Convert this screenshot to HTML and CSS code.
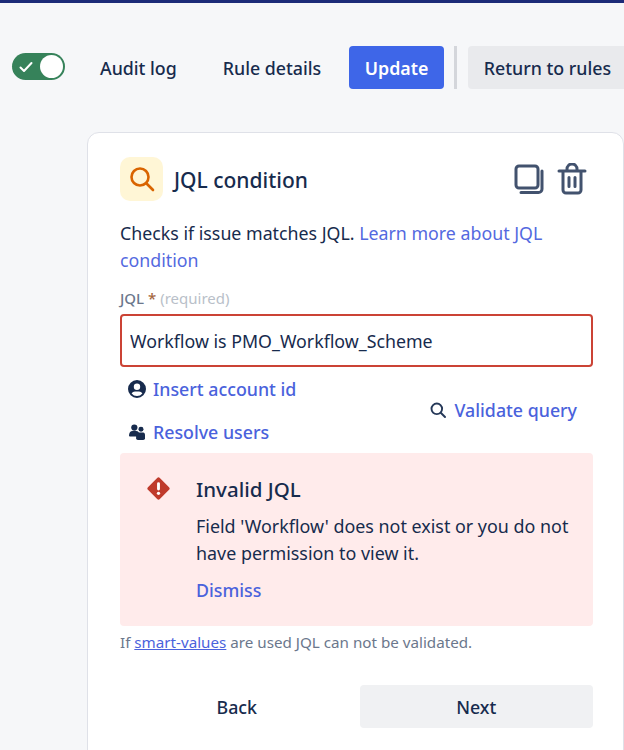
FILE: index.html
```html
<!DOCTYPE html>
<html lang="en">
<head>
<meta charset="utf-8">
<title>JQL condition</title>
<link rel="stylesheet" href="styles.css">
</head>
<body>
<div class="topline"></div>
<div class="toolbar">
  <div class="toggle">
    <svg class="toggle-check" viewBox="0 0 14 12" width="14" height="12"><path d="M1.5 6.5 5 10l7.5-8" fill="none" stroke="#fff" stroke-width="2" stroke-linecap="round" stroke-linejoin="round"/></svg>
    <span class="toggle-knob"></span>
  </div>
  <button class="btn btn-plain btn-audit">Audit log</button>
  <button class="btn btn-plain btn-details">Rule details</button>
  <button class="btn btn-primary">Update</button>
  <span class="divider"></span>
  <button class="btn btn-grey">Return to rules</button>
</div>
<main class="card">
  <header class="card-head">
    <span class="icon-tile">
      <svg viewBox="0 0 26 26" width="26" height="26"><circle cx="11" cy="11" r="8.5" fill="none" stroke="#d96400" stroke-width="2.6"/><path d="M17.5 17.5 24 24" stroke="#d96400" stroke-width="2.6" stroke-linecap="round"/></svg>
    </span>
    <h1 class="card-title">JQL condition</h1>
    <span class="head-actions">
      <svg viewBox="0 0 30 30" width="30" height="30"><rect x="2" y="2" width="22" height="22" rx="3" fill="none" stroke="#42526e" stroke-width="3"/><path d="M28 7v18a3.500 3.500 0 0 1-3.500 3.500H7" fill="none" stroke="#42526e" stroke-width="3" stroke-linecap="round"/></svg>
      <svg viewBox="0 0 30 32" width="30" height="32"><path d="M2 8h26" stroke="#42526e" stroke-width="3" stroke-linecap="round"/><path d="M10 8V6a5 5 0 0 1 10 0v2" fill="none" stroke="#42526e" stroke-width="3"/><path d="M6 9v18a3 3 0 0 0 3 3h12a3 3 0 0 0 3-3V9" fill="none" stroke="#42526e" stroke-width="3"/><path d="M12 14.500v9M18 14.500v9" stroke="#42526e" stroke-width="3" stroke-linecap="round"/></svg>
    </span>
  </header>
  <p class="desc">Checks if issue matches JQL. <a class="link" href="#">Learn more about JQL condition</a></p>
  <label class="field-label">JQL <span class="star">*</span> <span class="required">(required)</span></label>
  <input class="jql-input" type="text" value="Workflow is PMO_Workflow_Scheme">
  <div class="tools">
    <div class="tools-left">
      <a class="tool" href="#">
        <svg viewBox="0 0 18 18" width="18" height="18"><path fill="#172b4d" d="M9 0a9 9 0 1 0 0 18A9 9 0 0 0 9 0Zm0 3.500a3.200 3.200 0 1 1 0 6.400 3.200 3.200 0 0 1 0-6.400Zm0 12.600a7 7 0 0 1-5.400-2.500c.7-1.300 2-2.100 3.400-2.100h4c1.400 0 2.700.8 3.400 2.100A7 7 0 0 1 9 16.100Z"/></svg>
        <span>Insert account id</span>
      </a>
      <a class="tool" href="#">
        <svg viewBox="0 0 18 18" width="18" height="16"><circle cx="6" cy="4" r="3.500" fill="#172b4d"/><circle cx="13.500" cy="6" r="2.800" fill="#172b4d"/><path fill="#172b4d" d="M0 13c0-3 1.500-5 4-5h4c2.500 0 3.500 2 3.500 4v2H1a1 1 0 0 1-1-1Z"/><path fill="#172b4d" d="M8 16v-3c0-2 1-3.500 3-3.500h5c1.300 0 2 1.500 2 3V16a2 2 0 0 1-2 2h-6a2 2 0 0 1-2-2Z"/></svg>
        <span>Resolve users</span>
      </a>
    </div>
    <a class="tool tool-validate" href="#">
      <svg viewBox="0 0 16 16" width="16" height="16"><circle cx="6.800" cy="6.800" r="5.300" fill="none" stroke="#253858" stroke-width="1.900"/><path d="M11 11l4 4" stroke="#253858" stroke-width="1.900" stroke-linecap="round"/></svg>
      <span>Validate query</span>
    </a>
  </div>
  <section class="alert">
    <svg class="alert-icon" viewBox="0 0 24 24" width="24" height="24"><path fill="#bf3a2b" d="M10.600 1 1 10.600a2 2 0 0 0 0 2.800l9.600 9.600a2 2 0 0 0 2.800 0l9.600-9.600a2 2 0 0 0 0-2.800L13.400 1a2 2 0 0 0-2.800 0Z"/><rect x="10.500" y="5.500" width="3" height="8.500" rx="1.500" fill="#fff"/><circle cx="12" cy="17" r="1.700" fill="#fff"/></svg>
    <div class="alert-body">
      <h2 class="alert-title">Invalid JQL</h2>
      <p class="alert-text">Field 'Workflow' does not exist or you do not have permission to view it.</p>
      <a class="alert-dismiss" href="#">Dismiss</a>
    </div>
  </section>
  <p class="hint">If <a class="hint-link" href="#">smart-values</a> are used JQL can not be validated.</p>
  <div class="actions">
    <button class="btn btn-plain btn-wide">Back</button>
    <button class="btn btn-next btn-wide">Next</button>
  </div>
</main>
</body>
</html>
```
FILE: styles.css
```css
* { box-sizing: border-box; }
html, body { margin: 0; height: 750px; overflow: hidden; }
body {
  background: #f6f7f9;
  color: #172b4d;
  font-family: "Noto Sans", "Open Sans", sans-serif;
  width: 624px;
}
.topline { height: 3px; background: #1c2b78; }
.toolbar {
  display: flex;
  align-items: center;
  height: 43px;
  margin-top: 43px;
  padding-left: 12px;
  white-space: nowrap;
}
.toggle {
  width: 53px;
  height: 27px;
  border-radius: 14px;
  background: #36825a;
  display: flex;
  align-items: center;
  justify-content: space-between;
  padding: 0 2px 0 7px;
  flex: none;
  margin-right: 19px;
  margin-bottom: 2px;
}
.toggle-knob { width: 23px; height: 23px; border-radius: 50%; background: #fff; }
.btn {
  font-family: inherit;
  font-size: 17.800px;
  font-weight: 500;
  height: 43px;
  border: 0;
  border-radius: 4px;
  padding: 0 16px;
  color: #172b4d;
  flex: none;
}
.btn-plain { background: transparent; }
.btn-audit { margin-right: 14px; }
.btn-details { margin-right: 12px; }
.btn-primary { background: #3e66e8; color: #fff; font-weight: 600; padding: 0 15.500px; }
.btn-grey { background: #e9eaed; }
.divider { width: 3px; height: 43px; background: #d4d6db; margin: 0 11px 0 10px; flex: none; }
.card {
  margin: 43px 0 0 87px;
  width: 537px;
  height: 640px;
  background: #fff;
  border: 1px solid #dfe1e8;
  border-radius: 12px;
  padding: 24px 30px 0 32px;
}
.card-head { display: flex; align-items: center; height: 44px; }
.icon-tile {
  width: 43px;
  height: 44px;
  background: #fff6d6;
  border-radius: 10px;
  display: flex;
  align-items: center;
  justify-content: center;
  flex: none;
}
.card-title { margin: 2px 0 0 11px; font-size: 21px; font-weight: 500; flex: 1; }
.head-actions { display: flex; align-items: center; gap: 13px; margin-right: 6px; }
.desc { margin: 19px 0 0; font-size: 17.800px; line-height: 27px; }
.link { color: #5469e0; text-decoration: none; }
.field-label { display: block; margin-top: 14px; font-size: 15px; line-height: 20px; font-weight: 500; color: #6b778c; }
.star { color: #a5673f; }
.required { color: #b9bfc9; font-weight: 400; }
.jql-input {
  display: block;
  width: 100%;
  height: 53px;
  margin-top: 6px;
  border: 2px solid #cb4335;
  border-radius: 4px;
  padding: 0 8px;
  font-family: inherit;
  font-size: 17.800px;
  color: #172b4d;
  background: #fff;
}
.tools { display: flex; justify-content: space-between; align-items: center; padding: 0 16px 0 8px; height: 86px; }
.tools-left { display: flex; flex-direction: column; gap: 19px; }
.tool { display: flex; align-items: center; gap: 7px; color: #4a62dc; font-size: 17.800px; font-weight: 500; line-height: 24px; text-decoration: none; }
.tool-validate { gap: 9px; }
.alert {
  display: flex;
  height: 173px;
  background: #ffebeb;
  border-radius: 4px;
  padding: 22px 24px 0 26px;
}
.alert-icon { flex: none; margin: 2px 26px 0 1px; width: 23px; height: 23px; }
.alert-title { margin: 0; font-size: 20.500px; font-weight: 500; line-height: 28px; }
.alert-text { margin: 10px 0 0; font-size: 17.900px; line-height: 27px; }
.alert-dismiss { display: block; margin-top: 10px; color: #4a62dc; font-size: 17.800px; font-weight: 500; line-height: 27px; text-decoration: none; }
.hint { margin: 6px 0 0; font-size: 15.200px; line-height: 20px; color: #6b778c; }
.hint-link { color: #4a62dc; }
.actions { display: flex; gap: 6px; margin-top: 33px; }
.btn-wide { flex: 1; }
.btn-next { background: #f0f1f3; }
```
